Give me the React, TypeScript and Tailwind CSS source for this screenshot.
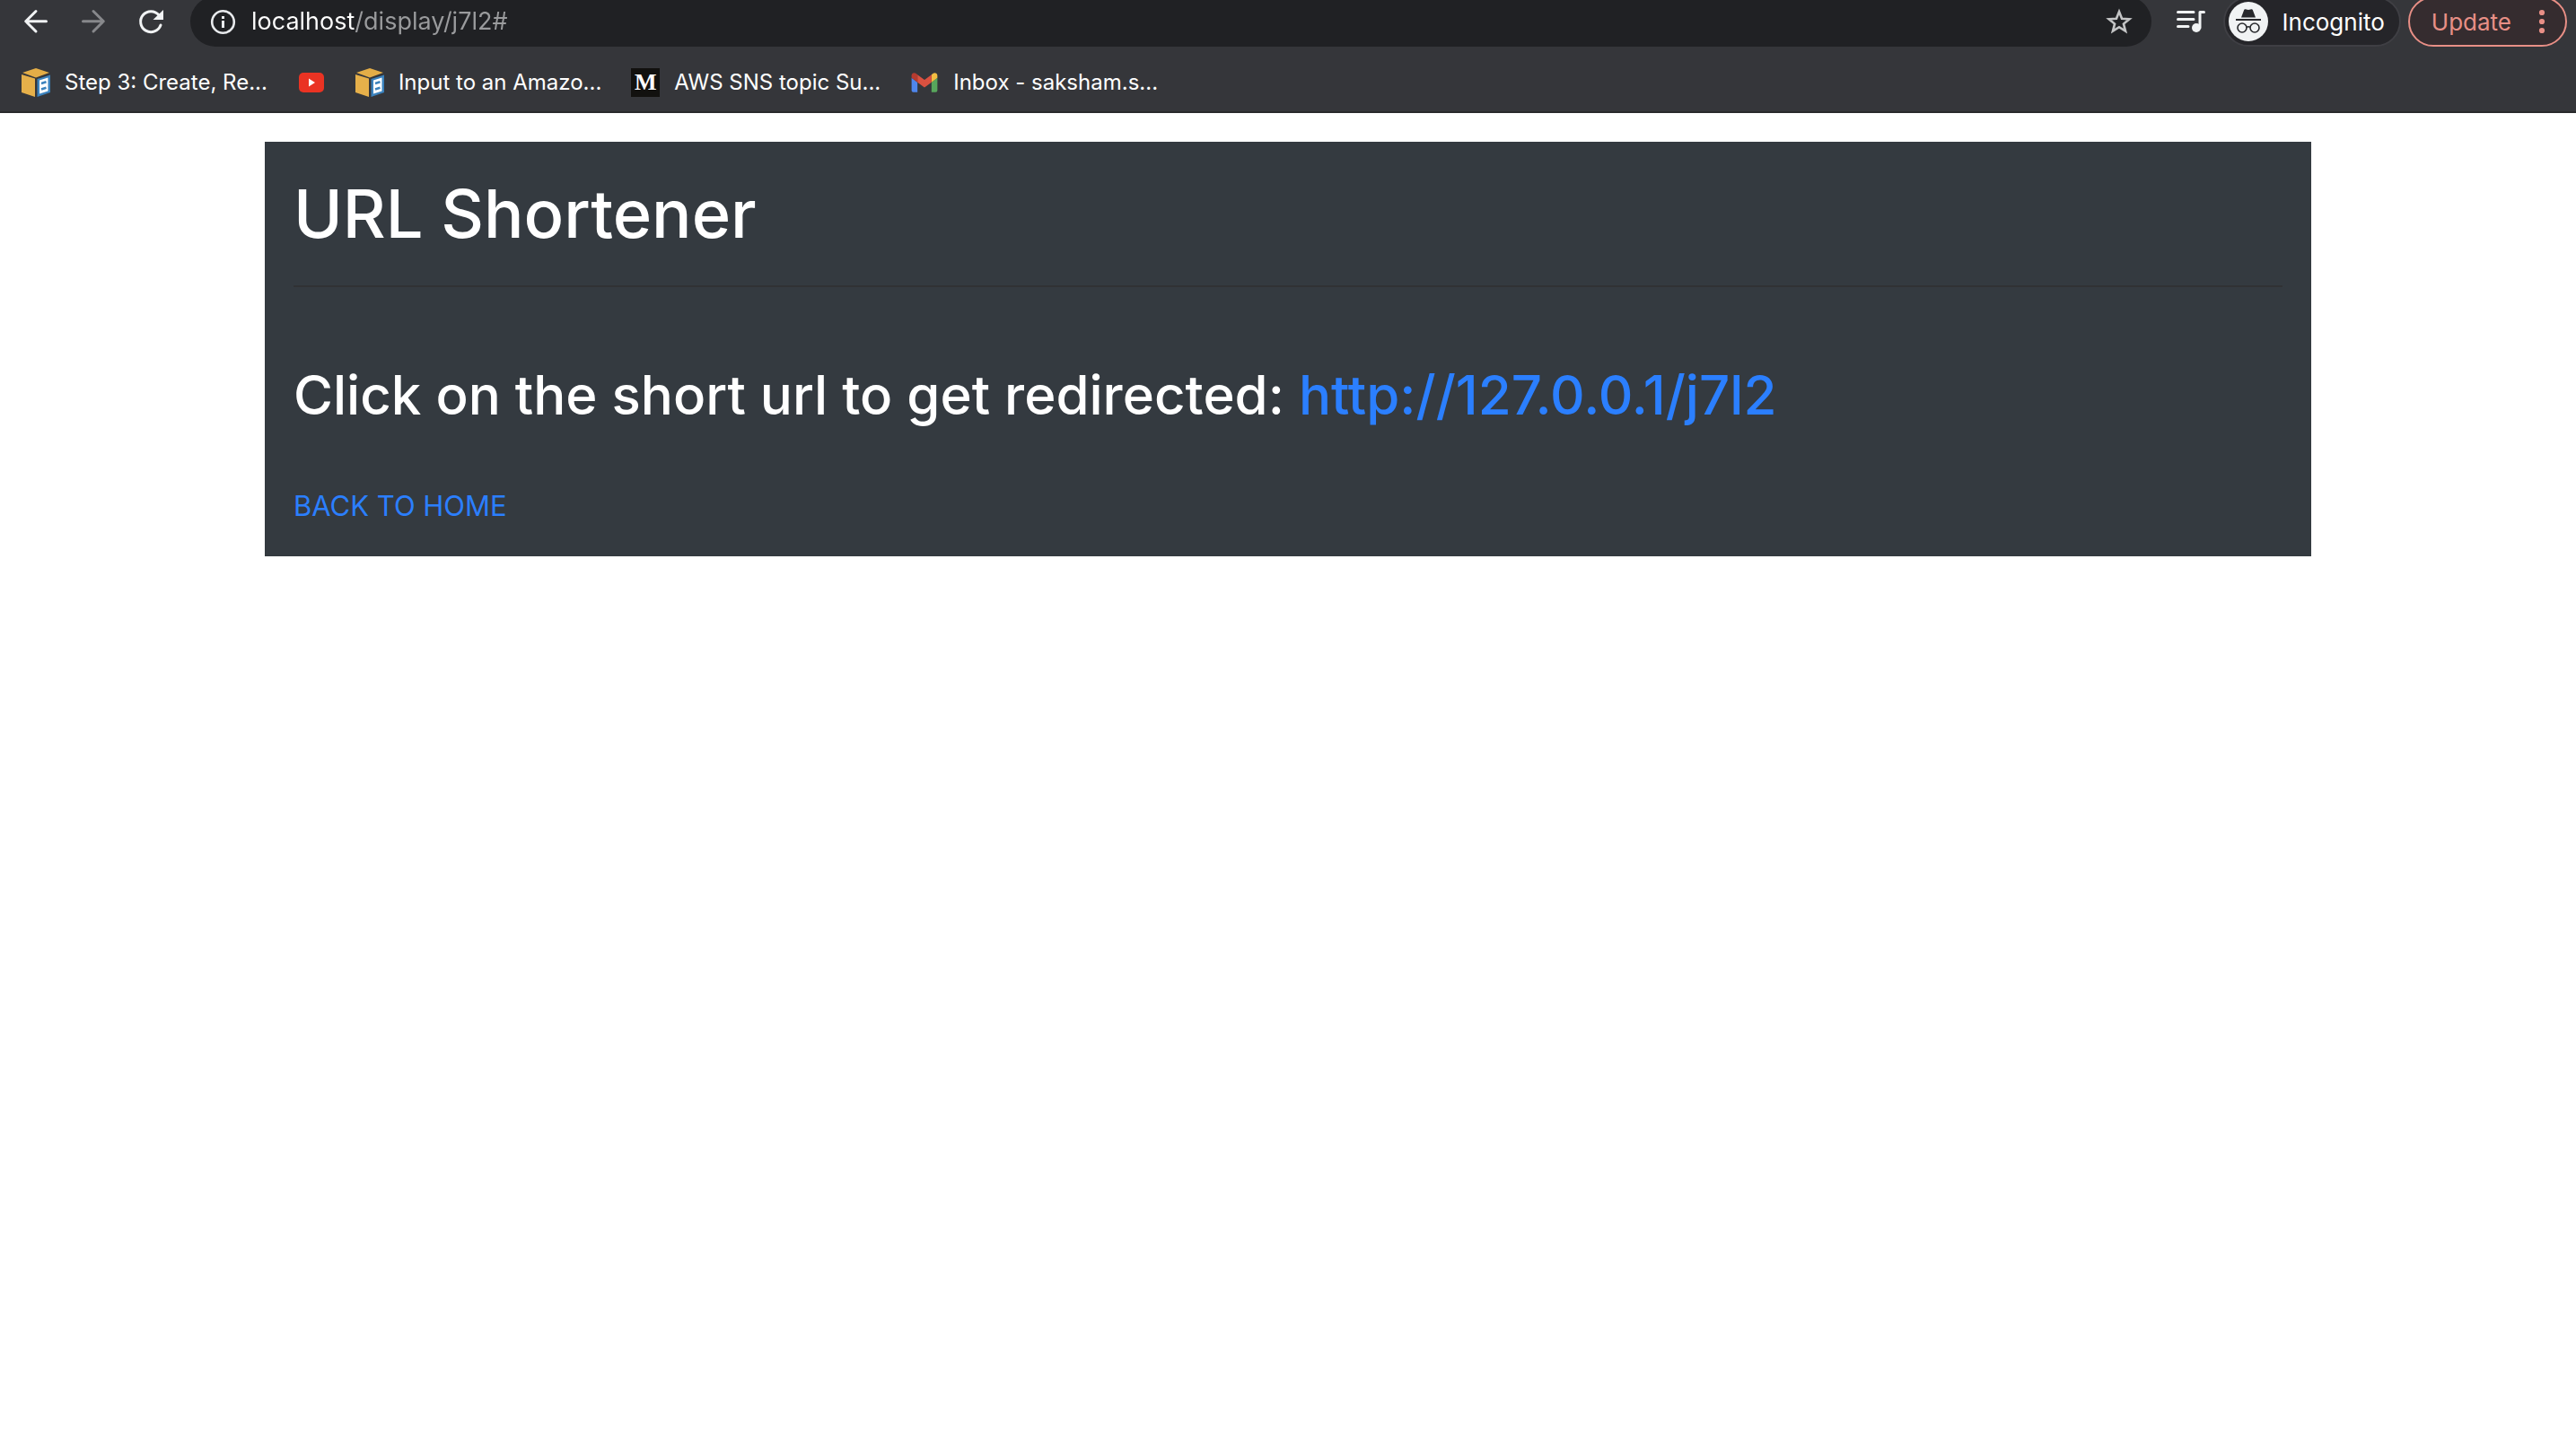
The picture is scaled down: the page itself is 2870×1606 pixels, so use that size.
import type { ReactNode } from "react";

const BackIcon = () => (
  <svg viewBox="0 0 32 32" className="size-8" fill="none" stroke="currentColor" strokeWidth="3" strokeLinecap="round" strokeLinejoin="round" aria-hidden="true">
    <path d="M16 4.5 4.7 15.7 16 27M5 15.7H27.5" />
  </svg>
);

const ForwardIcon = () => (
  <svg viewBox="0 0 32 32" className="size-8" fill="none" stroke="currentColor" strokeWidth="3" strokeLinecap="round" strokeLinejoin="round" aria-hidden="true">
    <path d="M16 4.5 27.3 15.7 16 27M27 15.7H4.5" />
  </svg>
);

const ReloadIcon = () => (
  <svg viewBox="0 0 32 32" className="size-8" fill="none" aria-hidden="true">
    <path d="M25 8.8A11.5 11.5 0 1 0 27 20" stroke="currentColor" strokeWidth="3" strokeLinecap="round" />
    <path d="M30 3V14H18.5Z" fill="currentColor" />
  </svg>
);

const InfoIcon = () => (
  <svg viewBox="0 0 32 32" className="size-8 shrink-0" fill="none" aria-hidden="true">
    <circle cx="16.5" cy="16.5" r="12.3" stroke="#e8eaed" strokeWidth="2.6" />
    <path d="M15 10h3v3h-3zM15 15h3v8h-3z" fill="#e8eaed" />
  </svg>
);

const StarIcon = () => (
  <svg viewBox="0 0 32 32" className="size-8" fill="none" aria-hidden="true">
    <path
      d="M16 5 19.06 12.79 27.41 13.29 20.95 18.61 23.05 26.71 16 22.2 8.95 26.71 11.05 18.61 4.59 13.29 12.94 12.79Z"
      stroke="currentColor"
      strokeWidth="2.6"
      strokeMiterlimit="10"
    />
  </svg>
);

const QueueIcon = () => (
  <svg viewBox="0 0 32 32" className="size-8" fill="none" stroke="currentColor" strokeWidth="3" strokeLinecap="round" aria-hidden="true">
    <path d="M1.5 5.5H19M1.5 13.5H19M1.5 21.5H13" />
    <path d="M30.5 5.5H26V23" strokeLinejoin="round" />
    <circle cx="22" cy="23" r="5" fill="currentColor" stroke="none" />
  </svg>
);

const IncognitoIcon = () => (
  <svg viewBox="0 0 44 44" className="size-11" fill="none" aria-hidden="true">
    <circle cx="22" cy="22" r="22" fill="#f1f3f4" />
    <path d="M14 17.5 17.2 9Q17.6 8 18.6 8.2L22 9 25.4 8.2Q26.4 8 26.8 9L30 17.5Z" fill="#27282c" />
    <path d="M8 20H36" stroke="#27282c" strokeWidth="2" />
    <circle cx="15" cy="29" r="5" stroke="#27282c" strokeWidth="1.6" />
    <circle cx="29" cy="29" r="5" stroke="#27282c" strokeWidth="1.6" />
    <path d="M20 28.4Q22 27 24 28.4" stroke="#27282c" strokeWidth="1.6" />
  </svg>
);

const DotsIcon = () => (
  <svg viewBox="0 0 8 32" className="h-8 w-2" fill="currentColor" aria-hidden="true">
    <circle cx="4" cy="6" r="3.1" />
    <circle cx="4" cy="16" r="3.1" />
    <circle cx="4" cy="26" r="3.1" />
  </svg>
);

const BoxIcon = () => (
  <svg viewBox="0 0 32 32" className="size-8 shrink-0" aria-hidden="true">
    <path d="M16 0 31 5 16 10.5 1 5Z" fill="#e3ad47" />
    <path d="M0 7 15 11.5V32L0 27Z" fill="#e6b04a" />
    <path d="M17.5 12 32 7.5V27L17.5 32Z" fill="#3b82bd" />
    <path d="M20 13.5 29.5 10.5V25.5L20 28.5Z" fill="#fff" />
    <path d="M22 17 27.5 15.3M22 23.5 27.5 21.8" stroke="#3b82bd" strokeWidth="2.6" />
  </svg>
);

const YoutubeIcon = () => (
  <svg viewBox="0 0 32 32" className="size-8 shrink-0" aria-hidden="true">
    <rect x="2" y="5" width="28" height="22" rx="5" fill="#ea3323" />
    <path d="M13 11.5 20 16 13 20.5Z" fill="#fff" />
  </svg>
);

const MediumIcon = () => (
  <span aria-hidden="true" className="flex size-8 shrink-0 items-center justify-center bg-[#12110f] font-['Liberation_Serif',serif] text-[26px] leading-8 font-bold text-white">
    M
  </span>
);

const GmailIcon = () => (
  <svg viewBox="47 26 98 98" className="size-8 shrink-0" aria-hidden="true">
    <path fill="#4f86ec" d="M58 108h14V74L52 59v43c0 3.32 2.69 6 6 6" />
    <path fill="#58a65c" d="M120 108h14c3.32 0 6-2.69 6-6V59l-20 15" />
    <path fill="#f2bd42" d="M120 48v26l20-15v-8c0-7.42-8.47-11.65-14.4-7.2" />
    <path fill="#d95140" d="M72 74V48l24 18 24-18v26L96 92" />
    <path fill="#b63b2f" d="M52 51v8l20 15V48l-5.6-4.2c-5.94-4.45-14.4-.22-14.4 7.2" />
  </svg>
);

const bookmarks: { icon: ReactNode; label: string; text?: string }[] = [
  { icon: <BoxIcon />, label: "Step 3", text: "Step 3: Create, Re..." },
  { icon: <YoutubeIcon />, label: "YouTube" },
  { icon: <BoxIcon />, label: "Input", text: "Input to an Amazo..." },
  { icon: <MediumIcon />, label: "AWS SNS", text: "AWS SNS topic Su..." },
  { icon: <GmailIcon />, label: "Inbox", text: "Inbox - saksham.s..." },
];

function Toolbar() {
  return (
    <div className="flex h-12 items-center pr-2.5 pl-2">
      <button type="button" aria-label="Back" className="flex size-16 items-center justify-center text-[#f1f3f4]">
        <BackIcon />
      </button>
      <button type="button" aria-label="Forward" className="flex size-16 items-center justify-center text-[#87888b]">
        <ForwardIcon />
      </button>
      <button type="button" aria-label="Reload" className="flex size-16 items-center justify-center text-[#f1f3f4]">
        <ReloadIcon />
      </button>
      <div className="ml-3 flex h-14 flex-1 items-center gap-4 rounded-full bg-[#202124] px-5">
        <InfoIcon />
        <input
          type="text"
          aria-label="Address"
          defaultValue="localhost/display/j7l2#"
          className="min-w-0 flex-1 bg-[linear-gradient(to_right,#fff_116px,#9a9b9d_116px)] bg-clip-text text-[27px] text-transparent outline-none"
        />
        <button type="button" aria-label="Bookmark this page" className="text-[#c4c5c6]">
          <StarIcon />
        </button>
      </div>
      <button type="button" aria-label="Media controls" className="mr-1 ml-3 flex size-16 items-center justify-center text-[#f1f3f4]">
        <QueueIcon />
      </button>
      <button type="button" className="flex h-14 items-center gap-4 rounded-full border-2 border-[#3f3f44] bg-[#252529] pr-4 pl-1 text-[26px] text-white">
        <IncognitoIcon />
        Incognito
      </button>
      <button type="button" className="ml-2 flex h-14 items-center gap-[30px] rounded-full border-2 border-[#e88f86] bg-[#352c2f] pr-[22px] pl-6 text-[26px] text-[#e88f86]">
        Update
        <DotsIcon />
      </button>
    </div>
  );
}

export default function App() {
  return (
    <div className="min-h-screen bg-white font-['Inter',sans-serif]">
      <header className="border-b-2 border-[#292a2c] bg-[#35363a]">
        <Toolbar />
        <nav aria-label="Bookmarks" className="mt-3 flex h-16 items-center gap-[33px] px-6">
          {bookmarks.map((b) => (
            <a key={b.label} href="#" aria-label={b.text ?? b.label} className="flex items-center gap-4 text-2xl whitespace-nowrap text-white">
              {b.icon}
              {b.text}
            </a>
          ))}
        </nav>
      </header>
      <main className="mx-auto mt-8 max-w-[2280px] bg-[#343a40] p-8 text-white">
        <h1 className="mb-8 text-[74px] leading-[96px] font-medium">URL Shortener</h1>
        <hr className="mb-20 border-t-2 border-[#303234]" />
        <h2 className="mb-15 text-[60px] leading-[80px] font-medium">
          Click on the short url to get redirected:{" "}
          <a href="#" className="text-[#2b7fff]">
            http://127.0.0.1/j7l2
          </a>
        </h2>
        <a href="#" className="block w-fit text-[31px] leading-[48px] text-[#2b7fff]">
          BACK TO HOME
        </a>
      </main>
    </div>
  );
}
